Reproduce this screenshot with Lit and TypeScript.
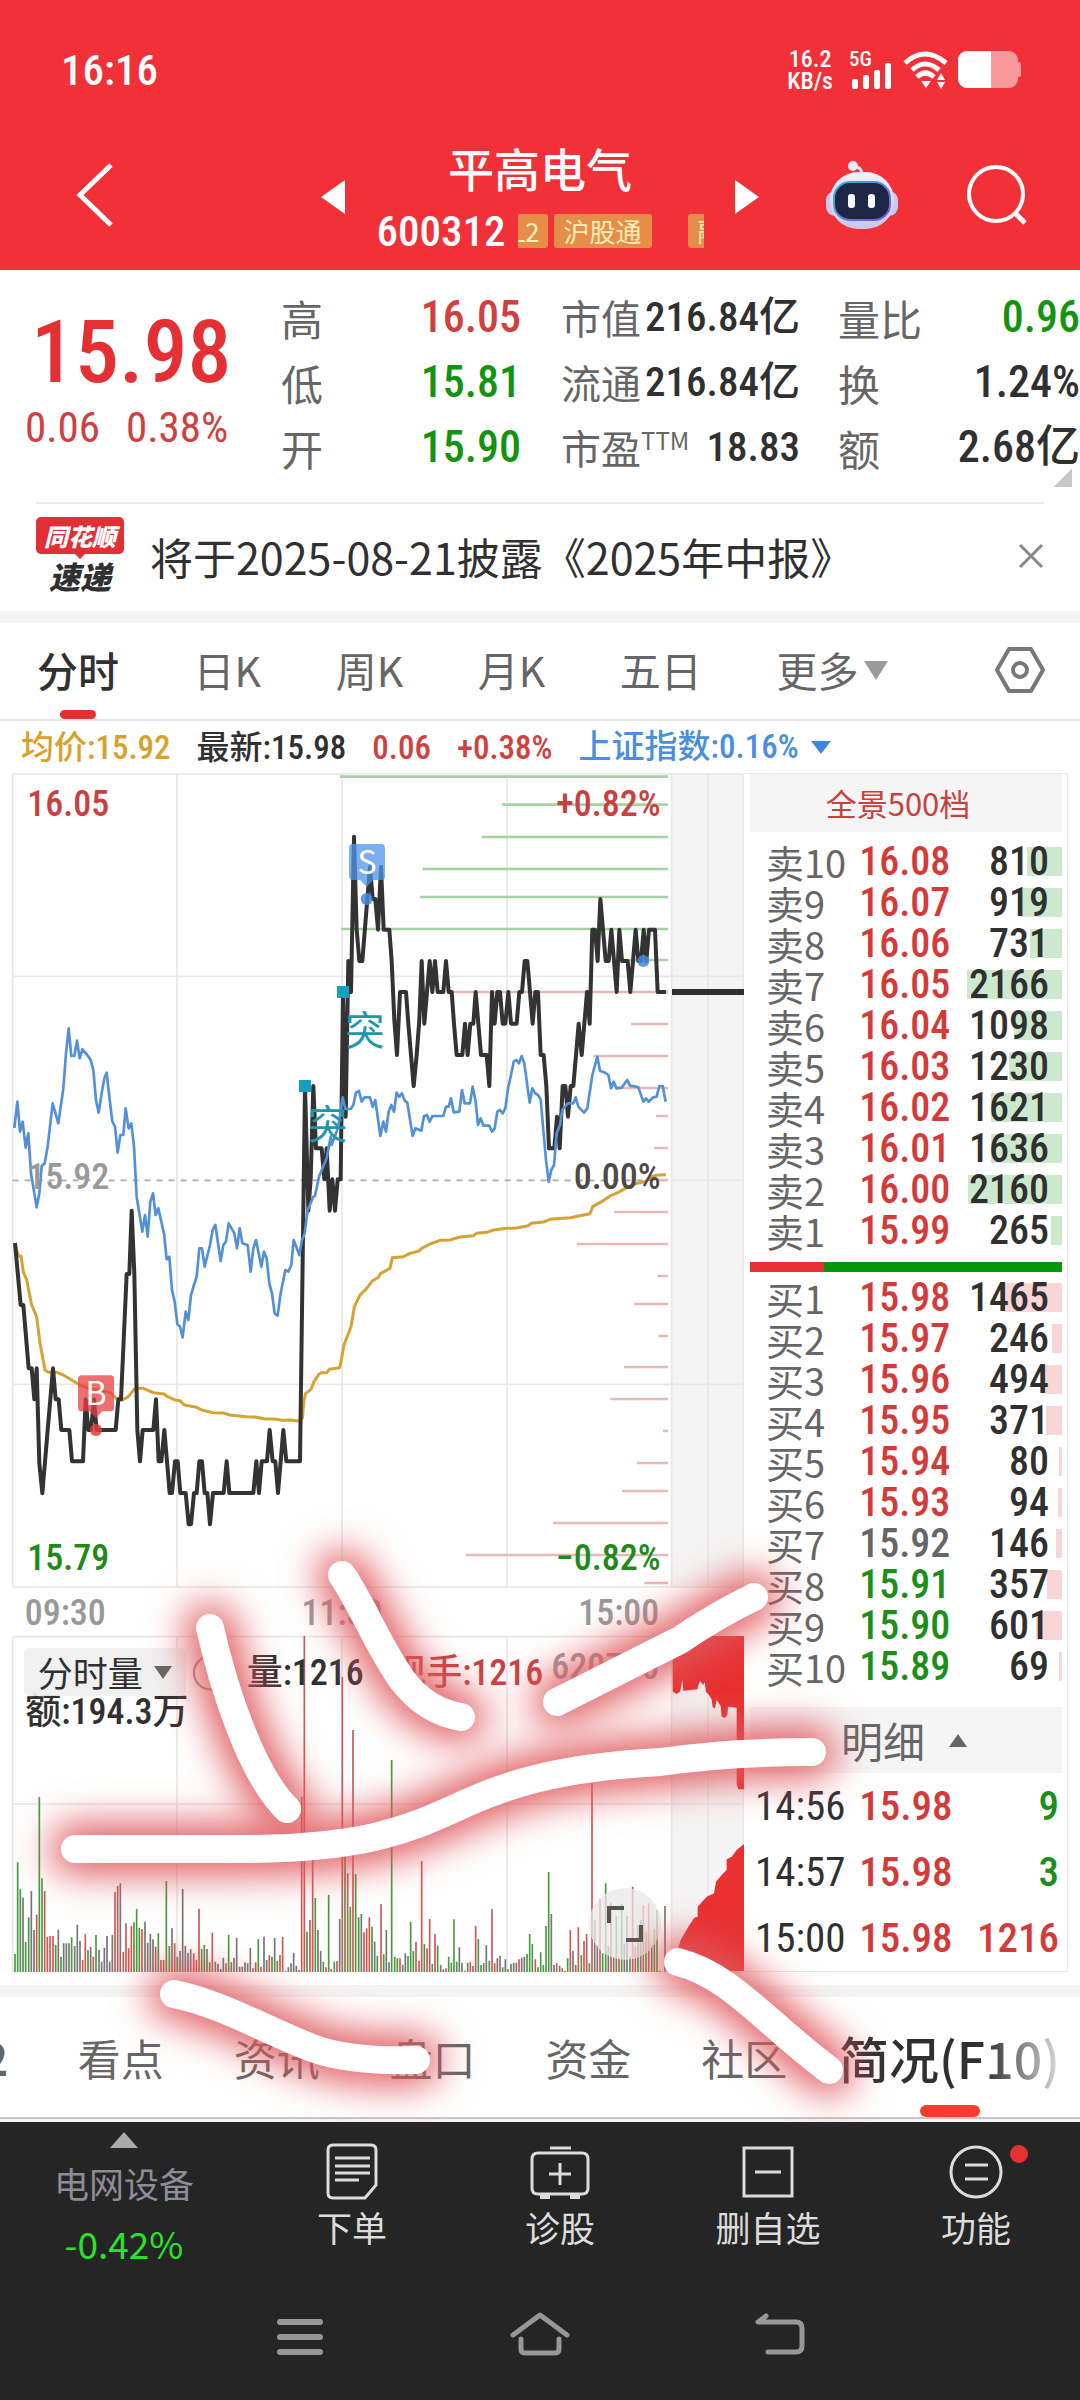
import { LitElement, html, svg, css } from "lit";
import { customElement } from "lit/decorators.js";
import { classMap } from "lit/directives/class-map.js";

type Tone = "up" | "down" | "flat";

const FONT = css`"Roboto Condensed", "Barlow", "Noto Sans CJK SC", "Roboto", sans-serif`;
const FONT_CJK = css`"Noto Sans CJK SC", "Roboto", sans-serif`;

/* Chart geometry is kept in thirds of a pixel; every series carries its own origin. */
const plot = (data: string, dx: number, dy: number): string =>
  data
    .trim()
    .split(/\s+/)
    .map((p) => {
      const [x, y] = p.split(",").map(Number);
      return `${x + dx},${y + dy}`;
    })
    .join(" ");

const PRICE_AM = `45,219 62,405 70,405 86,595 95,595 103,688 110,595 118,880 127,970 143,780 159,595 167,688 176,688 184,780 208,780 216,874 249,874 257,688 265,780 273,780 282,688 290,780 347,780 355,688 363,688 380,312 388,312 395,122 403,312 412,780 420,874 428,780 460,780 468,688 476,874 484,874 493,780 501,874 509,969 516,969 525,874 533,874 541,969 557,969 566,1063 573,1063 582,969 590,969 598,874 606,874 614,969 622,969 630,1063 639,969 671,969 680,874 688,969 760,969 769,874 777,969 785,874 801,874 809,780 818,874 826,874 834,969 850,780 859,874 900,874`;
const PRICE_PM = `15,978 25,1352 32,1258 40,978 48,1165 65,1165 73,1258 80,1165 89,1352 97,1258 105,1352 113,1258 122,1258 129,696 137,1070 145,603 153,696 162,230 170,509 178,603 187,603 202,417 210,320 218,417 226,417 234,509 243,320 251,509 268,509 275,603 283,780 291,885 300,696 318,696 325,791 333,885 341,978 350,885 358,780 365,603 373,791 381,696 389,603 397,696 405,603 413,696 430,696 438,603 446,696 455,696 462,791 470,885 487,885 495,791 503,885 511,791 520,791 527,696 535,791 543,885 560,885 568,978 576,696 584,791 592,696 600,696 608,791 616,791 625,696 633,791 650,791 658,696 666,696 674,603 682,603 690,696 698,791 706,696 714,696 722,885 731,885 739,978 747,1165 763,1165 771,1070 779,1165 788,978 796,978 804,1070 812,978 820,978 828,885 836,791 845,885 853,791 861,696 869,791 877,509 885,509 893,603 901,417 909,509 917,603 926,603 934,509 942,603 950,696 958,509 966,603 983,603 991,696 999,603 1007,509 1015,603 1023,603 1031,509 1039,603 1047,509 1065,509 1073,696 1098,696`;
const INDEX_AM = `43,1104 52,1025 60,1115 68,1085 77,1163 85,1120 93,1240 110,1342 118,1300 125,1218 134,1210 143,1160 158,1030 175,1090 190,985 198,880 206,805 214,888 223,888 231,842 239,895 247,868 262,885 272,900 280,930 288,1020 296,1058 305,1000 313,955 320,938 328,1010 337,1085 345,1100 353,1178 361,1125 370,1125 377,1045 386,1105 394,1090 402,1160 410,1310 427,1415 435,1365 443,1430 451,1325 459,1300 467,1365 475,1345 492,1420 500,1498 508,1490 516,1590 524,1625 532,1692 540,1700 548,1732 557,1655 565,1680 573,1605 582,1575 590,1550 598,1465 606,1465 614,1520 630,1455 638,1410 646,1395 662,1503 670,1455 678,1445 686,1390 703,1420 711,1465 719,1405 727,1450 743,1455 752,1535 760,1465 768,1440 784,1520 792,1475 800,1495 808,1570 816,1600 824,1660 833,1667 841,1605 856,1530 865,1535 874,1515 881,1440 898,1485 906,1440 914,1420 923,1350 940,1310`;
const INDEX_PM = `45,1308 57,1250 80,1195 92,1130 95,1155 115,1100 128,1012 136,1047 152,1047 160,1035 168,998 177,993 185,1025 193,1012 210,1012 218,1040 226,1020 241,1128 250,1085 258,1115 266,1055 274,1035 282,1055 290,998 298,1010 306,1000 314,1022 322,1028 338,1128 346,1105 364,1112 372,1068 381,1065 389,1085 397,1068 430,1068 438,1040 446,1040 453,1015 461,1057 478,1055 486,990 494,1030 510,1030 518,980 527,1025 534,1095 542,1075 550,1097 568,1097 576,1115 584,1105 592,1055 600,1050 608,1060 616,1045 624,985 633,945 641,905 649,900 657,910 665,888 673,910 689,1028 697,985 706,1000 714,1005 722,1018 730,1110 738,1200 746,1265 754,1230 762,1215 770,1120 780,1095 787,1050 803,1030 820,1030 827,1012 835,1040 852,1058 862,1045 877,945 892,890 900,932 915,938 925,945 933,985 941,965 949,985 965,983 982,960 990,977 1008,980 1015,982 1030,1025 1038,1015 1046,1025 1060,1012 1070,1010 1078,978 1088,978 1097,1025`;
const AVG_AM = `45,222 55,258 63,258 70,305 80,330 95,405 110,440 120,520 135,600 145,607 170,607 190,615 210,627 240,645 270,657 300,660 330,668 350,685 367,690 385,680 405,655 430,655 460,668 492,672 503,680 525,690 540,692 553,705 590,712 605,720 640,728 670,729 690,735 740,740 765,741 795,747 825,747 845,751 870,750 895,753 907,745 912,690 917,670 933,658 942,635 957,612 965,608 980,608 988,598 1018,593`;
const AVG_PM = `0,500 12,435 33,380 43,320 60,285 80,265 97,243 115,232 122,220 150,205 157,173 190,170 210,160 237,153 245,145 270,132 300,121 330,120 360,111 400,107 410,100 440,97 460,90 500,85 530,84 565,77 573,70 610,66 630,58 690,53 720,47 750,41 758,20 785,5 810,-12 835,-23 865,-40 890,-50 915,-55 940,-72 955,-75 978,-76`;

const priceLine = `${plot(PRICE_AM, 0, 3510)} ${plot(PRICE_PM, 900, 2280)}`;
const indexLine = `${plot(INDEX_AM, 0, 2280)} ${plot(INDEX_PM, 900, 2280)}`;
const avgLine = `${plot(AVG_AM, 0, 3510)} ${plot(AVG_PM, 1020, 3600)}`;

/* y and left end of each price-distribution bar */
const DIST_GREEN: [number, number][] = [[50, 120], [134, 606], [231, 546], [327, 368], [411, 360], [507, 123], [600, 985]];
const DIST_RED: [number, number][] = [
  [696, 455], [792, 993], [888, 880], [984, 945], [1068, 1068], [1164, 1062], [1260, 1075], [1356, 942], [1452, 831],
  [1548, 1073], [1632, 1002], [1728, 1075], [1821, 972], [1917, 931], [2013, 1089], [2109, 1011], [2193, 966],
  [2289, 759], [2385, 498], [2469, 1033],
];

/* top edge of each minute bar plus its colour: r, g or k */
const VOL_A = `1182g 907g 988g 1013k 1146g 1072g 993k 1110k 1064r 711g 955g 993r 1130r 1128r 1128r 1155g 1109k 1190g 1150k 1150k 1150k 1132g 1158k 1094k 1143k 1200r 1123r 1170g 1160k 1190r 1125g 1170k 1205k 1163k 1128k 1205k 1125k 996r 978r 970k 1175r 1090r 1165r 1098r 1087g 1047g 1103g 1107r 1085k 1148k 1122k 1138k 1160r 1120g 1200r 1200r 963g 1158g 1105k 1150r 1190g 1173k 987k 1158k 1178k 1168k 1180r 1200r 1046r 1167g 1155g 1167k 1207g 1118r 1205k 1212k 1227k 1193k 1210r 1125g 1207k 1193k 1134k 1220k 1220k 1207k 1210k 1164k 1225r 1207r 1137g 1220r 1130k 1200k 1186r 1190g 1134k 1203g 1185r 1131r 1232k 1222k 1210k 1178k 1217k 1230k 710r 228r 1115g 1080r 890r 1014g 1110k 1173k 1205g 1222r 1005g 1227r 1205g 1203r 1077k 350r 880g 940r 1040g 510r 942g 1072g 1062k 1117r 1105r 1072r 1100g 1145k 1187g`;
const VOL_B = `852r 1003g 930k 1027k 420g 1010g 1015g 1015r 1035k 1000k 1008g 906g 993g 965r 1022r 723r 972g 985r 897r 1032g 942r 977g 1035k 1048k 1045r 1010g 1028g 898g 1025g 982k 1028k 1052r 1028g 1025r 1038r 918r 957g 1035g 1030k 976k 1022g 867r 1030r 1015k 1008k 1042g 1018k 1047r 1032g 1028k 1028k 1018r 1013k 1010k 1002g 942g 972g 1018r 1042g 997g 1035g 918g 756g 882k 1035k 1030r 1037g 1045r 1052k 1015g 930r 993k 1035k 922r 1005g 963r 942r 1030g 490r 900k 975k 838r 1000g 790g 978k 848r 1010r 887g 1012r 852g 970k 888k 1010g 800r 982r 915g 900k 855r 935g 850r 975k 927g 870g 1052k 1055k 858k`;

const volPath = (data: string, x0: number, y0: number, floor: number, tone: string): string =>
  data
    .split(" ")
    .map((d, i) => (d.endsWith(tone) ? `M${Math.round(x0 + i * 8.115)} ${parseInt(d) + y0}V${floor}` : ""))
    .join("");

const SELLS: [string, string, Tone, number, number][] = [
  ["卖10", "16.08", "up", 810, 35], ["卖9", "16.07", "up", 919, 40], ["卖8", "16.06", "up", 731, 32],
  ["卖7", "16.05", "up", 2166, 95], ["卖6", "16.04", "up", 1098, 48], ["卖5", "16.03", "up", 1230, 53],
  ["卖4", "16.02", "up", 1621, 71], ["卖3", "16.01", "up", 1636, 71], ["卖2", "16.00", "up", 2160, 94],
  ["卖1", "15.99", "up", 265, 11],
];
const BUYS: [string, string, Tone, number, number][] = [
  ["买1", "15.98", "up", 1465, 58], ["买2", "15.97", "up", 246, 10], ["买3", "15.96", "up", 494, 17],
  ["买4", "15.95", "up", 371, 16], ["买5", "15.94", "up", 80, 3], ["买6", "15.93", "up", 94, 4],
  ["买7", "15.92", "flat", 146, 6], ["买8", "15.91", "down", 357, 15], ["买9", "15.90", "down", 601, 26],
  ["买10", "15.89", "down", 69, 3],
];

@customElement("status-bar")
class StatusBar extends LitElement {
  static styles = css`
    :host { display: flex; justify-content: space-between; align-items: center; height: 56px; padding: 42px 59px 2px 61px; color: #fff; font-family: ${FONT}; font-weight: 500; }
    .time { font-size: 43px; line-height: 52px; }
    .right { display: flex; align-items: center; gap: 9px; }
    .rate { font-size: 24px; line-height: 22px; text-align: center; margin-right: 8px; }
    svg { display: block; }
  `;
  render() {
    return html`
      <span class="time">16:16</span>
      <div class="right">
        <div class="rate">16.2<br />KB/s</div>
        <svg width="44" height="40" viewBox="0 0 44 40" fill="#fff">
          <text x="-1" y="16" font-size="21">5G</text>
          <rect x="2" y="29" width="6" height="10" rx="2" /><rect x="13" y="25" width="6" height="14" rx="2" />
          <rect x="24" y="20" width="6" height="19" rx="2" /><rect x="35" y="13" width="6" height="26" rx="2" />
        </svg>
        <svg width="46" height="40" viewBox="0 0 46 40">
          <g fill="none" stroke="#fff" stroke-width="5">
            <path d="M2 13Q22-5 43 13" /><path d="M9 20Q22 8 36 20" /><path d="M14 27Q22 19 31 27" />
          </g>
          <path d="M18 31h10l-5 7zM34 30l4-7 4 7zM34 32l4 7 4-7z" fill="#fff" />
        </svg>
        <svg width="63" height="38" viewBox="0 0 63 38">
          <rect width="60" height="37" rx="9" fill="#f9999c" /><rect x="58" y="11" width="5" height="15" rx="2" fill="#f9999c" />
          <path d="M9 0h24v37H9a9 9 0 0 1-9-9V9a9 9 0 0 1 9-9z" fill="#fff" />
        </svg>
      </div>
    `;
  }
}

@customElement("stock-header")
class StockHeader extends LitElement {
  static styles = css`
    :host { display: grid; grid-template-columns: 321fr 438fr 321fr; align-items: center; height: 150px; padding-top: 20px; color: #fff; font-family: ${FONT}; }
    button { border: 0; background: none; padding: 0; color: inherit; display: block; }
    svg { display: block; }
    .back { margin-left: 74px; }
    .mid { display: flex; align-items: center; justify-content: space-between; padding-top: 4px; }
    .name { display: flex; flex-direction: column; align-items: center; }
    h1 { margin: 0; font: 500 46px/68px ${FONT_CJK}; }
    .sub { display: flex; align-items: center; gap: 12px; height: 60px; }
    .code { font-size: 43px; font-weight: 500; line-height: 60px; }
    .tags { display: flex; gap: 6px; width: 186px; overflow: hidden; font: 400 26px/34px ${FONT_CJK}; color: #fff0b8; }
    .tag { flex: none; background: #e68e49; border-radius: 3px; padding: 0 10px; white-space: nowrap; }
    .tag.cut { width: 28px; padding: 0 8px 0 0; margin-left: -6px; direction: rtl; overflow: hidden; }
    .tag.next { margin-left: 30px; }
    .actions { display: flex; justify-content: flex-end; align-items: center; gap: 67px; padding-right: 52px; }
  `;
  render() {
    return html`
      <button class="back" aria-label="返回">
        <svg width="42" height="68" viewBox="0 0 42 68"><path d="M37 4L6 34l31 30" fill="none" stroke="#fff" stroke-width="5" /></svg>
      </button>
      <div class="mid">
        <button aria-label="上一只"><svg width="24" height="34" viewBox="0 0 24 34"><path d="M24 0v34L0 17z" fill="#fff" /></svg></button>
        <div class="name">
          <h1>平高电气</h1>
          <div class="sub">
            <span class="code">600312</span>
            <div class="tags"><span class="tag cut">L2</span><span class="tag">沪股通</span><span class="tag next">融</span></div>
          </div>
        </div>
        <button aria-label="下一只"><svg width="24" height="34" viewBox="0 0 24 34"><path d="M0 0v34l24-17z" fill="#fff" /></svg></button>
      </div>
      <div class="actions">
        <button aria-label="智能助手">
          <svg width="74" height="70" viewBox="0 0 74 70">
            <defs>
              <linearGradient id="shell" x1="0" y1="0" x2="0" y2="1"><stop offset="0" stop-color="#f4f0ff" /><stop offset="1" stop-color="#c9c6ee" /></linearGradient>
              <linearGradient id="rim" x1="0" y1="0" x2="1" y2="1"><stop offset="0" stop-color="#35b8d8" /><stop offset="1" stop-color="#7a4fe0" /></linearGradient>
            </defs>
            <path d="M37 14q-1-8-8-7" fill="none" stroke="#e9e4fa" stroke-width="3" /><circle cx="28" cy="6" r="5" fill="#efe8fb" />
            <rect x="1" y="31" width="72" height="25" rx="9" fill="#cdc8f2" />
            <rect x="5" y="12" width="64" height="57" rx="28" fill="url(#shell)" />
            <rect x="9" y="22" width="56" height="38" rx="16" fill="#1d2745" stroke="url(#rim)" stroke-width="2" />
            <rect x="23" y="34" width="7" height="14" rx="3" fill="#fff" /><rect x="43" y="34" width="7" height="14" rx="3" fill="#fff" />
          </svg>
        </button>
        <button aria-label="搜索">
          <svg width="62" height="62" viewBox="0 0 62 62" fill="none" stroke="#fff" stroke-width="4"><circle cx="30" cy="30" r="27" /><path d="M49 49l10 10" stroke-width="5" /></svg>
        </button>
      </div>
    `;
  }
}

@customElement("quote-panel")
class QuotePanel extends LitElement {
  static styles = css`
    :host { display: grid; grid-template-columns: 281fr 240fr 40fr 239fr 38fr 242fr; height: 232px; position: relative; color: #303030; font-family: ${FONT}; }
    .last { padding: 32px 0 0 25px; }
    .price { font-size: 88px; line-height: 100px; font-weight: 500; color: #e53033; margin-left: 6px; }
    .chg { display: flex; gap: 26px; font-size: 43px; line-height: 50px; font-weight: 400; color: #d0403e; }
    dl { margin: 0; padding-top: 15px; }
    .row { display: flex; justify-content: space-between; align-items: center; height: 65px; white-space: nowrap; }
    dt { font: 400 42px/65px ${FONT_CJK}; color: #666; }
    sup { font-size: 24px; line-height: 20px; }
    dd { margin: 0; font-size: 44px; line-height: 65px; font-weight: 500; }
    .cap dd { font-size: 41px; }
    .cap dt { font-size: 40px; }
    .up { color: #d0403e; } .down { color: #13930f; }
    .corner { position: absolute; right: 8px; bottom: 15px; width: 18px; height: 18px; background: linear-gradient(135deg, transparent 50%, #c8c8c8 50%); }
  `;
  render() {
    return html`
      <div class="last">
        <div class="price">15.98</div>
        <div class="chg"><span>0.06</span><span>0.38%</span></div>
      </div>
      <dl>
        <div class="row"><dt>高</dt><dd class="up">16.05</dd></div>
        <div class="row"><dt>低</dt><dd class="down">15.81</dd></div>
        <div class="row"><dt>开</dt><dd class="down">15.90</dd></div>
      </dl>
      <span></span>
      <dl class="cap">
        <div class="row"><dt>市值</dt><dd>216.84亿</dd></div>
        <div class="row"><dt>流通</dt><dd>216.84亿</dd></div>
        <div class="row"><dt>市盈<sup>TTM</sup></dt><dd>18.83</dd></div>
      </dl>
      <span></span>
      <dl class="ratio">
        <div class="row"><dt>量比</dt><dd class="down">0.96</dd></div>
        <div class="row"><dt>换</dt><dd>1.24%</dd></div>
        <div class="row"><dt>额</dt><dd>2.68亿</dd></div>
      </dl>
      <i class="corner"></i>
    `;
  }
}

@customElement("news-strip")
class NewsStrip extends LitElement {
  static styles = css`
    :host { display: flex; align-items: center; height: 103px; padding-bottom: 4px; margin: 0 36px; border-top: 2px solid #ececec; font-family: ${FONT_CJK}; color: #303030; }
    .logo { flex: none; width: 88px; font-weight: 900; font-style: italic; text-align: center; }
    .badge { display: block; background: #e03035; color: #fff; border-radius: 5px; font-size: 24px; line-height: 37px; position: relative; clip-path: none; }
    .badge::after { content: ""; position: absolute; left: 38px; top: 36px; border: 6px solid transparent; border-top-color: #e03035; }
    .word { display: block; font-size: 31px; line-height: 36px; padding-top: 4px; }
    a { flex: 1; margin-left: 26px; font-size: 43px; line-height: 60px; color: inherit; text-decoration: none; white-space: nowrap; }
    button { border: 0; background: none; padding: 0; }
    svg { display: block; }
  `;
  render() {
    return html`
      <span class="logo"><span class="badge">同花顺</span><span class="word">速递</span></span>
      <a href="#report">将于2025-08-21披露《2025年中报》</a>
      <button aria-label="关闭"><svg width="26" height="26" viewBox="0 0 26 26"><path d="M2 2l22 22M24 2L2 24" stroke="#888" stroke-width="3" /></svg></button>
    `;
  }
}

@customElement("period-tabs")
class PeriodTabs extends LitElement {
  static styles = css`
    :host { display: block; border-top: 12px solid #f4f4f4; font-family: ${FONT_CJK}; }
    nav { display: flex; justify-content: space-between; height: 96px; padding: 0 35px 0 37px; border-bottom: 2px solid #e6e6e6; }
    button { border: 0; background: none; padding: 0; font: 400 41px/92px ${FONT_CJK}; color: #666; position: relative; display: flex; gap: 6px; }
    button svg { margin-top: 38px; }
    .on { color: #303030; font-weight: 500; }
    .on::after { content: ""; position: absolute; left: 50%; bottom: 0; width: 36px; height: 9px; margin-left: -18px; border-radius: 5px; background: #e53033; }
    .more { margin-right: 32px; }
    .set svg { margin-top: 23px; }
    .info { display: flex; gap: 26px; padding-left: 21px; font: 500 33px/54px ${FONT}; height: 52px; color: #303030; white-space: nowrap; }
    .avg { color: #d9a02c; } .up { color: #d0403e; } .idx { color: #4a8fdc; display: flex; align-items: center; gap: 12px; }
  `;
  render() {
    return html`
      <nav>
        <button class="on">分时</button><button>日K</button><button>周K</button><button>月K</button><button>五日</button>
        <button class="more">更多<svg width="24" height="20" viewBox="0 0 24 20"><path d="M0 0h24L12 19z" fill="#999" /></svg></button>
        <button class="set" aria-label="设置"><svg width="50" height="48" viewBox="0 0 50 48" fill="none" stroke="#777" stroke-width="4"><path d="M14 3h22l12 21-12 21H14L2 24z" stroke-linejoin="round" /><circle cx="25" cy="24" r="7" /></svg></button>
      </nav>
      <div class="info">
        <span class="avg">均价:15.92</span><span>最新:15.98</span><span class="up">0.06</span><span class="up">+0.38%</span>
        <span class="idx">上证指数:0.16%<svg width="20" height="13" viewBox="0 0 20 13"><path d="M0 0h20L10 13z" fill="#3f87d8" /></svg></span>
      </div>
    `;
  }
}

@customElement("minute-chart")
class MinuteChart extends LitElement {
  static styles = css`
    :host { display: block; position: relative; font-family: ${FONT}; font-weight: 500; }
    svg { display: block; width: 100%; height: auto; }
    text { font-size: 108px; }
    .up { fill: #c9403f; } .down { fill: #1d8a1a; } .axis { fill: #999; } .ink { fill: #303030; } .zero { fill: #4a4a4a; }
    .grid { stroke: #e8e8e8; stroke-width: 5; fill: none; }
    .end { text-anchor: end; } .center { text-anchor: middle; }
    .signal { font-size: 118px; fill: #1f96ac; font-weight: 400; }
    .mark { fill: #fff; font-size: 96px; text-anchor: middle; font-family: ${FONT_CJK}; font-weight: 400; }
    button { border: 0; padding: 0; position: absolute; }
    .chip { left: 3.2%; top: 72.8%; display: flex; align-items: center; gap: 11px; height: 48px; padding: 0 14px; border-radius: 6px; background: rgba(238, 238, 238, 0.9); color: #303030; font: 400 35px/48px ${FONT_CJK}; }
    .chip svg, .full svg { width: auto; }
    .full { left: 79.1%; top: 92.8%; width: 72px; height: 72px; border-radius: 50%; background: rgba(232, 232, 232, 0.75); display: flex; align-items: center; justify-content: center; }
  `;
  render() {
    const tones: [string, string][] = [["r", "#cd5656"], ["g", "#469a3e"], ["k", "#757575"]];
    return html`
      <svg viewBox="0 2319 2232 3606" role="img" aria-label="分时走势">
        <rect x="2013" y="2319" width="216" height="2442" fill="#f4f4f4" />
        <rect x="2013" y="4908" width="216" height="1008" fill="#f4f4f4" />
        <path class="grid" d="M38 2322H2230M38 2929H2230M38 4153H2230M38 4761H2230M38 2322V4761M531 2322V4761M1026 2322V4761M1521 2322V4761M2124 2322V4761M2230 2322V4761M2016 3541H2230" />
        <path class="grid" d="M38 4910H2230M38 5412H2230M38 4910V5916M531 4910V5916M1026 4910V5916M1521 4910V5916M2124 4910V5916M2230 4910V5916" />
        <path class="grid" d="M2015 2322V4761M2015 4910V5916" stroke-linecap="square" />
        <path d="M38 3541H2004" stroke="#aaa" stroke-width="5" stroke-dasharray="18 18" />
        <g stroke-width="8">
          <path stroke="#a5d3a3" d=${DIST_GREEN.map(([y, x]) => `M${x + 900} ${y + 2280}H2004`).join("")} />
          <path stroke="#ebb6b6" d=${DIST_RED.map(([y, x]) => `M${x + 900} ${y + 2280}H2004`).join("")} />
        </g>
        <path d="M2016 2976H2232" stroke="#303030" stroke-width="18" />
        <g fill="none" stroke-linejoin="round">
          <polyline points=${avgLine} stroke="#d6a233" stroke-width="9" />
          <polyline points=${priceLine} stroke="#333" stroke-width="12" />
          <polyline points=${indexLine} stroke="#5290d8" stroke-width="8" />
        </g>
        <rect x="897" y="3240" width="36" height="36" fill="#149fc0" /><rect x="1011" y="2958" width="36" height="36" fill="#149fc0" />
        <text class="signal" x="1036" y="3135">突</text><text class="signal" x="924" y="3417">突</text>
        <path d="M1058 2532h86q11 0 11 11v86q0 11-11 11h-24l-20 20-20-20h-22q-11 0-11-11v-86q0-11 11-11z" fill="#4f94ea" opacity=".75" />
        <text class="mark" x="1101" y="2622">S</text>
        <circle cx="1100" cy="2697" r="18" fill="#4487df" opacity=".85" /><circle cx="1930" cy="2883" r="18" fill="#4487df" opacity=".85" />
        <path d="M245 4126h86q11 0 11 11v86q0 11-11 11h-24l-19 20-20-20h-23q-11 0-11-11v-86q0-11 11-11z" fill="#e83f3f" opacity=".75" />
        <text class="mark" x="288" y="4215">B</text>
        <circle cx="288" cy="4290" r="18" fill="#e23b3b" opacity=".85" />
        <text class="up" x="82" y="2448">16.05</text><text class="up end" x="1982" y="2448">+0.82%</text>
        <text class="axis" x="82" y="3567">15.92</text><text class="zero end" x="1982" y="3567">0.00%</text>
        <text class="down" x="82" y="4709">15.79</text><text class="down end" x="1982" y="4709">−0.82%</text>
        <text class="axis" x="74" y="4875">09:30</text><text class="axis center" x="1026" y="4875">11:30</text><text class="axis end" x="1978" y="4875">15:00</text>
        ${tones.map(
          ([t, c]) => svg`<path stroke=${c} stroke-width="5" d=${volPath(VOL_A, 45, 4680, 5916, t) + volPath(VOL_B, 1143, 4860, 5916, t)} />`
        )}
        <path fill="#e83030" d="M2018 4908H2232V5368H2215L2210 5352V5123L2184 5120 2182 5145 2175 5153 2165 5150 2162 5118 2150 5100 2145 5125 2138 5122 2135 5098 2125 5082 2118 5076 2114 5045 2110 5055 2100 5043 2095 5055 2092 5068 2050 5072 2047 5040 2040 5075 2030 5082 2018 5075z" />
        <path fill="#e83030" d="M2232 5913H2020L2035 5845 2042 5820 2065 5780 2083 5753 2093 5750V5720L2120 5690 2142 5680 2148 5645 2165 5625 2180 5610V5578L2195 5570 2210 5550 2232 5532z" />
        <text class="ink" x="76" y="5172">额:194.3万</text>
        <circle cx="632" cy="5018" r="50" fill="none" stroke="#999" stroke-width="7" />
        <text class="ink" x="740" y="5055">量:1216</text><text class="up end" x="1630" y="5055">现手:1216</text>
        <text class="axis end" x="1978" y="5036">620700</text>
      </svg>
      <button class="chip">分时量<svg width="18" height="13" viewBox="0 0 18 13"><path d="M0 0h18L9 13z" fill="#666" /></svg></button>
      <button class="full" aria-label="全屏"><svg width="36" height="36" viewBox="0 0 36 36" fill="none" stroke="#555" stroke-width="4"><path d="M2 17V2h15M34 19v15H19" /></svg></button>
    `;
  }
}

@customElement("order-book")
class OrderBook extends LitElement {
  static styles = css`
    :host { display: flex; flex-direction: column; margin-right: 12px; padding: 0 5px 0 6px; border: 1px solid #e8e8e8; border-left: 0; font-family: ${FONT}; color: #303030; }
    button { border: 0; padding: 0; background: #f5f5f5; display: flex; align-items: center; justify-content: center; flex: none; }
    .all { height: 58px; margin-bottom: 9px; padding-right: 16px; color: #c9403f; font: 400 31px/58px ${FONT_CJK}; }
    .detail { height: 66px; gap: 24px; margin-top: 20px; padding-right: 4px; color: #666; font: 400 42px/66px ${FONT_CJK}; }
    table { border-collapse: collapse; width: 100%; table-layout: fixed; }
    td { padding: 0; height: 41px; line-height: 41px; white-space: nowrap; }
    .lv { width: 35%; padding-left: 16px; box-sizing: border-box; font-family: ${FONT_CJK}; font-size: 38px; color: #666; text-align: left; font-weight: 400; }
    .px { width: 30%; font-size: 40px; font-weight: 500; }
    .qty { position: relative; text-align: right; font-size: 40px; font-weight: 500; padding-right: 13px; }
    .qty span { position: relative; }
    .bar { position: absolute; right: 0; top: 6px; height: 29px; background: #cde9cd; }
    .buy .bar { background: #f9d5d5; }
    .up { color: #d63a38; } .down { color: #1b8f18; } .flat { color: #666; }
    .split { flex: none; height: 10px; margin: 11px 0 5px; background: linear-gradient(90deg, #e53033 23.6%, #069606 23.6%); }
    .ticks td { height: 66px; font-size: 41px; font-weight: 500; }
    .ticks td:nth-child(1) { width: 35%; padding-left: 5px; box-sizing: border-box; font-weight: 400; }
    .ticks td:nth-child(2) { width: 30%; }
    .ticks td:last-child { text-align: right; padding-right: 3px; }
  `;
  side(rows: typeof SELLS, buy: boolean) {
    return html`<table class=${classMap({ buy })}>
      ${rows.map(
        ([lv, px, tone, qty, w]) => html`<tr>
          <td class="lv">${lv}</td>
          <td class="px ${tone}">${px}</td>
          <td class="qty"><i class="bar" style="width:${w}px"></i><span>${qty}</span></td>
        </tr>`
      )}
    </table>`;
  }
  render() {
    const ticks: [string, number, string][] = [["14:56", 9, "down"], ["14:57", 3, "down"], ["15:00", 1216, "up"]];
    return html`
      <button class="all">全景500档</button>
      ${this.side(SELLS, false)}
      <div class="split"></div>
      ${this.side(BUYS, true)}
      <button class="detail">明细<svg width="18" height="13" viewBox="0 0 18 13"><path d="M0 13h18L9 0z" fill="#666" /></svg></button>
      <table class="ticks">
        ${ticks.map(([t, q, c]) => html`<tr><td>${t}</td><td class="up">15.98</td><td class=${c}>${q}</td></tr>`)}
      </table>
    `;
  }
}

@customElement("section-tabs")
class SectionTabs extends LitElement {
  static styles = css`
    :host { display: block; border-top: 12px solid #f4f4f4; border-bottom: 3px solid #f4f4f8; }
    nav { display: flex; justify-content: space-between; align-items: flex-start; height: 120px; padding-right: 20px; border-bottom: 2px solid #c6c6c8; overflow: hidden; }
    button { border: 0; background: none; padding: 0; height: 120px; font: 400 43px/118px ${FONT_CJK}; color: #666; white-space: nowrap; position: relative; }
    .cut { font-weight: 700; width: 8px; direction: rtl; overflow: hidden; }
    .on { font-size: 50px; color: transparent; background: linear-gradient(90deg, #303030 66%, #d0d0d0 98%); -webkit-background-clip: text; background-clip: text; margin-left: -18px; font-weight: 500; }
    .on::after { content: ""; position: absolute; left: 50%; bottom: 0; width: 60px; height: 12px; margin-left: -30px; border-radius: 6px; background: #fa3b30; }
  `;
  render() {
    return html`<nav>
      <button class="cut">2</button><button>看点</button><button>资讯</button><button>盘口</button><button>资金</button><button>社区</button>
      <button class="on">简况(F10)</button>
    </nav>`;
  }
}

@customElement("bottom-dock")
class BottomDock extends LitElement {
  static styles = css`
    :host { display: block; background: #252525; height: 279px; font-family: ${FONT_CJK}; }
    svg { display: block; }
    .dock { display: grid; grid-template-columns: 248fr 208fr 208fr 208fr 208fr; height: 165px; }
    button { border: 0; background: none; padding: 0; color: #dcdcdc; font: 400 35px/52px ${FONT_CJK}; display: flex; flex-direction: column; align-items: center; }
    .tool { padding-top: 21px; gap: 1px; }
    .sector { padding-top: 10px; color: #8e8c96; }
    .sector span { padding-top: 9px; }
    .sector b { font-size: 37px; font-weight: 400; line-height: 52px; padding-top: 8px; color: #28e428; }
    .nav { display: grid; grid-template-columns: repeat(3, 1fr); padding: 23px 180px 0; }
  `;
  render() {
    const icons: [string, unknown][] = [
      ["下单", svg`<path d="M11 2h38q5 0 5 5v35L43 55H11q-5 0-5-5V7q0-5 5-5zM13 15h35M13 23h35M13 30h35M13 37h24" />`],
      ["诊股", svg`<path d="M20 5h21M8 10h44q6 0 6 6v29q0 6-6 6H8q-6 0-6-6V16q0-6 6-6zM19 31h22M30 20v22" /><path d="M10 54h10M40 54h10" stroke-width="4" />`],
      ["删自选", svg`<path d="M6 5h48v48H6zM17 29h26" />`],
      ["功能", svg`<circle cx="30" cy="29" r="25" /><path d="M19 22h23M19 36h23" /><circle cx="73" cy="11" r="9" fill="#e53033" stroke="none" />`],
    ];
    return html`
      <div class="dock">
        <button class="sector">
          <svg width="28" height="16" viewBox="0 0 28 16"><path d="M0 16h28L14 0z" fill="#aaa" /></svg>
          <span>电网设备</span><b>-0.42%</b>
        </button>
        ${icons.map(
          ([label, glyph]) => html`<button class="tool">
            <svg width="60" height="57" viewBox="0 0 60 57" fill="none" stroke="#dcdcdc" stroke-width="3" overflow="visible">${glyph}</svg>${label}
          </button>`
        )}
      </div>
      <div class="nav">
        <button aria-label="最近任务"><svg width="60" height="50" viewBox="0 0 60 50" stroke="#979797" stroke-width="6" stroke-linecap="round"><path d="M10 12h40M10 27h40M10 42h40" /></svg></button>
        <button aria-label="主页"><svg width="60" height="50" viewBox="0 0 60 50" fill="none" stroke="#979797" stroke-width="5" stroke-linecap="round" stroke-linejoin="round"><path d="M3 25L30 5l27 20M11 29v10q0 4 4 4h30q4 0 4-4V29" /></svg></button>
        <button aria-label="返回"><svg width="60" height="50" viewBox="0 0 60 50" fill="none" stroke="#979797" stroke-width="5" stroke-linecap="round" stroke-linejoin="round"><path d="M16 6L8 12h38q6 0 6 6v18q0 6-6 6H18" /></svg></button>
      </div>
    `;
  }
}

@customElement("pen-layer")
class PenLayer extends LitElement {
  static styles = css`
    :host { position: absolute; inset: 0; pointer-events: none; }
    svg { display: block; width: 100%; height: auto; }
    path { fill: none; stroke-linecap: round; stroke-linejoin: round; }
    .halo { stroke: #e0585d; stroke-width: 50; filter: url(#soft); }
    .ink { stroke: #fff; stroke-width: 28; }
  `;
  render() {
    const strokes = [
      "M210 1628C224 1690 252 1775 287 1809",
      "M75 1849H240C480 1849 420 1775 660 1762Q730 1752 812 1752",
      "M342 1575C362 1604 380 1650 403 1681Q426 1711 461 1717",
      "M557 1702L680 1640Q715 1616 754 1597",
      "M174 1994C220 2003 270 2032 312 2048Q350 2062 416 2060",
      "M678 1962C730 1975 765 2022 829 2070",
    ];
    return html`<svg viewBox="0 0 1080 2400" aria-hidden="true">
      <defs><filter id="soft" filterUnits="userSpaceOnUse" x="0" y="1400" width="1080" height="900"><feGaussianBlur stdDeviation="19" /></filter></defs>
      ${strokes.map((d) => svg`<path class="halo" d=${d} />`)}
      ${strokes.map((d) => svg`<path class="ink" d=${d} />`)}
    </svg>`;
  }
}

@customElement("app-root")
class AppRoot extends LitElement {
  static styles = css`
    :host { display: block; position: relative; background: #fff; overflow: hidden; }
    header { background: #f13037; }
    .market { display: grid; grid-template-columns: minmax(0, 744fr) minmax(0, 336fr); align-items: start; padding-bottom: 10px; }
  `;
  render() {
    return html`
      <header><status-bar></status-bar><stock-header></stock-header></header>
      <quote-panel></quote-panel>
      <news-strip></news-strip>
      <period-tabs></period-tabs>
      <main class="market"><minute-chart></minute-chart><order-book></order-book></main>
      <section-tabs></section-tabs>
      <bottom-dock></bottom-dock>
      <pen-layer></pen-layer>
    `;
  }
}
